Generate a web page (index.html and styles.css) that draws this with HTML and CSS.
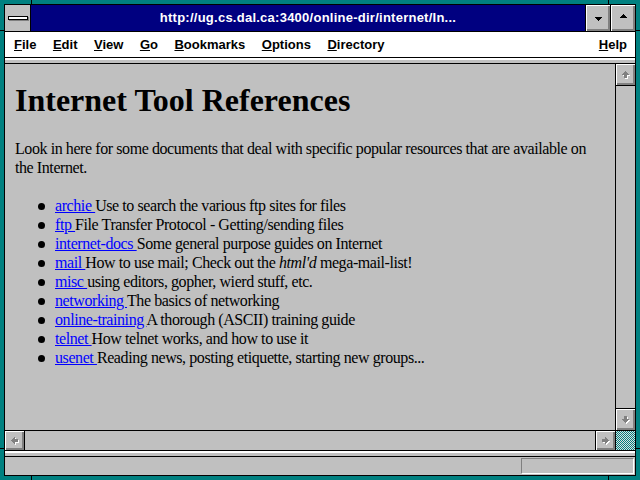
FILE: index.html
```html
<!DOCTYPE html>
<html lang="en">
<head>
    <meta charset="UTF-8">
    <title>Internet Tool References</title>
    <link rel="stylesheet" href="styles.css">
</head>
<body>
    <div class="window">
        <!-- resize corner marks on the frame -->
        <span class="mark mark-v top left"></span>
        <span class="mark mark-v top right"></span>
        <span class="mark mark-v bottom left"></span>
        <span class="mark mark-v bottom right"></span>
        <span class="mark mark-h upper left"></span>
        <span class="mark mark-h upper right"></span>
        <span class="mark mark-h lower left"></span>
        <span class="mark mark-h lower right"></span>

        <div class="frame">
            <div class="titlebar">
                <div class="sysmenu"><span class="sysbar"></span></div>
                <div class="caption">http://ug.cs.dal.ca:3400/online-dir/internet/In...</div>
                <div class="capbtn">
                    <svg width="24" height="26" viewBox="0 0 24 26" shape-rendering="crispEdges">
                        <polygon fill="#000" points="9,12 16,12 16,13 15,13 15,14 14,14 14,15 13,15 13,16 12,16 12,15 11,15 11,14 10,14 10,13 9,13"/>
                    </svg>
                </div>
                <div class="capbtn">
                    <svg width="24" height="26" viewBox="0 0 24 26" shape-rendering="crispEdges">
                        <polygon fill="#000" points="12,9 13,9 13,10 14,10 14,11 15,11 15,12 16,12 16,13 9,13 9,12 10,12 10,11 11,11 11,10 12,10"/>
                    </svg>
                </div>
            </div>

            <div class="menubar">
                <span class="menu"><u>F</u>ile</span>
                <span class="menu"><u>E</u>dit</span>
                <span class="menu"><u>V</u>iew</span>
                <span class="menu"><u>G</u>o</span>
                <span class="menu"><u>B</u>ookmarks</span>
                <span class="menu"><u>O</u>ptions</span>
                <span class="menu"><u>D</u>irectory</span>
                <span class="menu help"><u>H</u>elp</span>
            </div>

            <div class="strip"></div>

            <div class="viewer">
                <div class="page">
                    <h1>Internet Tool References</h1>
                    <p>Look in here for some documents that deal with specific popular resources that are available on the Internet.</p>
                    <ul class="refs">
                        <li><a href="#">archie </a>Use to search the various ftp sites for files</li>
                        <li><a href="#">ftp </a>File Transfer Protocol - Getting/sending files</li>
                        <li><a href="#">internet-docs </a>Some general purpose guides on Internet</li>
                        <li><a href="#">mail </a>How to use mail; Check out the <i>html'd</i> mega-mail-list!</li>
                        <li><a href="#">misc </a>using editors, gopher, wierd stuff, etc.</li>
                        <li><a href="#">networking </a>The basics of networking</li>
                        <li><a href="#">online-training </a>A thorough (ASCII) training guide</li>
                        <li><a href="#">telnet </a>How telnet works, and how to use it</li>
                        <li><a href="#">usenet </a>Reading news, posting etiquette, starting new groups...</li>
                    </ul>
                </div>
                <div class="vscroll">
                    <div class="sbtn sbtn-up">
                        <svg width="10" height="10" viewBox="0 0 10 10" shape-rendering="crispEdges">
                            <polygon fill="#fff" transform="translate(1 1)" points="4,1 5,1 5,2 6,2 6,3 7,3 7,4 8,4 8,5 6,5 6,8 3,8 3,5 1,5 1,4 2,4 2,3 3,3 3,2 4,2"/>
                            <polygon fill="#808080" points="4,1 5,1 5,2 6,2 6,3 7,3 7,4 8,4 8,5 6,5 6,8 3,8 3,5 1,5 1,4 2,4 2,3 3,3 3,2 4,2"/>
                        </svg>
                    </div>
                    <div class="vtrack"></div>
                    <div class="sbtn sbtn-down">
                        <svg width="10" height="10" viewBox="0 0 10 10" shape-rendering="crispEdges">
                            <polygon fill="#fff" transform="translate(1 1)" points="3,1 6,1 6,4 8,4 8,5 7,5 7,6 6,6 6,7 5,7 5,8 4,8 4,7 3,7 3,6 2,6 2,5 1,5 1,4 3,4"/>
                            <polygon fill="#808080" points="3,1 6,1 6,4 8,4 8,5 7,5 7,6 6,6 6,7 5,7 5,8 4,8 4,7 3,7 3,6 2,6 2,5 1,5 1,4 3,4"/>
                        </svg>
                    </div>
                </div>
            </div>

            <div class="hscroll">
                <div class="sbtn sbtn-left">
                    <svg width="10" height="10" viewBox="0 0 10 10" shape-rendering="crispEdges">
                        <polygon fill="#fff" transform="translate(1 1)" points="1,4 1,5 2,5 2,6 3,6 3,7 4,7 4,8 5,8 5,6 8,6 8,3 5,3 5,1 4,1 4,2 3,2 3,3 2,3 2,4"/>
                        <polygon fill="#808080" points="1,4 1,5 2,5 2,6 3,6 3,7 4,7 4,8 5,8 5,6 8,6 8,3 5,3 5,1 4,1 4,2 3,2 3,3 2,3 2,4"/>
                    </svg>
                </div>
                <div class="htrack"></div>
                <div class="sbtn sbtn-right">
                    <svg width="10" height="10" viewBox="0 0 10 10" shape-rendering="crispEdges">
                        <polygon fill="#fff" transform="translate(1 1)" points="1,3 1,6 4,6 4,8 5,8 5,7 6,7 6,6 7,6 7,5 8,5 8,4 7,4 7,3 6,3 6,2 5,2 5,1 4,1 4,3"/>
                        <polygon fill="#808080" points="1,3 1,6 4,6 4,8 5,8 5,7 6,7 6,6 7,6 7,5 8,5 8,4 7,4 7,3 6,3 6,2 5,2 5,1 4,1 4,3"/>
                    </svg>
                </div>
                <div class="corner"></div>
            </div>

            <div class="strip"></div>

            <div class="statusbar">
                <div class="statusbox"></div>
            </div>
        </div>
    </div>
</body>
</html>
```

FILE: styles.css
```css
body {
    margin: 0;
    background: #008080;
    font-family: "Liberation Sans", Arial, sans-serif;
}

.window {
    position: relative;
    width: 640px;
    height: 480px;
    box-sizing: border-box;
    padding: 4px;
    background: #008080;
}

.frame {
    height: 100%;
    box-sizing: border-box;
    border: 1px solid #000;
    background: #c0c0c0;
    display: flex;
    flex-direction: column;
}

/* small black ticks on the sizing border */
.mark {
    position: absolute;
    background: #000;
}

.mark-v {
    width: 1px;
    height: 4px;
}

.mark-h {
    width: 4px;
    height: 1px;
}

.mark-v.top { top: 0; }
.mark-v.bottom { bottom: 0; }
.mark-v.left { left: 31px; }
.mark-v.right { left: 608px; }

.mark-h.upper { top: 30px; }
.mark-h.lower { top: 448px; }
.mark-h.left { left: 0; }
.mark-h.right { right: 0; }

/* title bar */
.titlebar {
    display: flex;
    height: 26px;
    border-bottom: 1px solid #000;
}

.sysmenu {
    width: 25px;
    border-right: 1px solid #000;
    background: #c0c0c0;
    display: flex;
    align-items: center;
    justify-content: center;
}

.sysbar {
    width: 18px;
    height: 2px;
    background: #fff;
    border: 1px solid #000;
    box-shadow: 1px 1px 0 #808080;
}

.caption {
    flex: 1;
    background: #000080;
    color: #fff;
    font-weight: bold;
    font-size: 13px;
    letter-spacing: 0.25px;
    line-height: 26px;
    text-align: center;
    white-space: nowrap;
    overflow: hidden;
}

.capbtn {
    width: 24px;
    border-left: 1px solid #000;
    background: #c0c0c0;
    box-shadow: inset 1px 1px 0 #fff, inset -2px -2px 0 #808080;
}

.capbtn svg {
    display: block;
}

/* menu bar */
.menubar {
    display: flex;
    align-items: center;
    gap: 16.5px;
    height: 25px;
    padding: 0 8px 0 9px;
    background: #fff;
    border-bottom: 1px solid #000;
    font-size: 13px;
    font-weight: bold;
    color: #000;
}

.menu u {
    text-decoration: underline;
    text-underline-offset: 1px;
}

.menu.help {
    margin-left: auto;
}

.strip {
    height: 3px;
    border-top: 2px solid #fff;
    background: #c0c0c0;
}

/* document area */
.viewer {
    flex: 1;
    display: flex;
    min-height: 0;
    border-top: 1px solid #000;
    border-bottom: 1px solid #000;
}

.page {
    flex: 1;
    overflow: hidden;
    padding: 0 10px;
    border-right: 1px solid #000;
    font-family: "Liberation Serif", "Times New Roman", serif;
    font-size: 16px;
    line-height: 19px;
    letter-spacing: -0.42px;
    color: #000;
}

.page h1 {
    margin: 18px 0 21px;
    font-size: 32px;
    line-height: 36px;
    font-weight: bold;
    letter-spacing: 0;
}

.page p {
    margin: 0;
}

.refs {
    list-style: none;
    margin: 19px 0 0;
    padding-left: 40px;
}

.refs li::before {
    content: '';
    display: inline-block;
    width: 7px;
    height: 7px;
    margin-left: -17px;
    margin-right: 10px;
    border-radius: 50%;
    background: #000;
    vertical-align: 1px;
}

.refs a {
    color: #0000ff;
    text-decoration: underline;
}

/* scroll bars */
.vscroll {
    width: 19px;
    display: flex;
    flex-direction: column;
}

.vtrack,
.htrack {
    flex: 1;
    background: #c0c0c0;
}

.sbtn {
    display: flex;
    align-items: center;
    justify-content: center;
    background: #c0c0c0;
    box-shadow: inset 1px 1px 0 #fff, inset -2px -2px 0 #808080;
}

.sbtn-up {
    height: 21px;
    border-bottom: 1px solid #000;
}

.sbtn-down {
    height: 21px;
    border-top: 1px solid #000;
}

.hscroll {
    display: flex;
    height: 19px;
    border-bottom: 1px solid #000;
}

.sbtn-left {
    width: 19px;
    border-right: 1px solid #000;
}

.sbtn-right {
    width: 19px;
    border-left: 1px solid #000;
    border-right: 1px solid #000;
}

.corner {
    width: 19px;
    background: repeating-conic-gradient(#008080 0 25%, #e0e0e0 0 50%) 0 0 / 2px 2px;
}

/* status bar */
.statusbar {
    flex: none;
    height: 18px;
    border-top: 1px solid #000;
    display: flex;
    justify-content: flex-end;
    align-items: center;
    padding-right: 1px;
}

.statusbox {
    width: 111px;
    height: 14px;
    border-top: 1px solid #808080;
    border-left: 1px solid #808080;
    border-bottom: 1px solid #fff;
    border-right: 1px solid #fff;
}
```
